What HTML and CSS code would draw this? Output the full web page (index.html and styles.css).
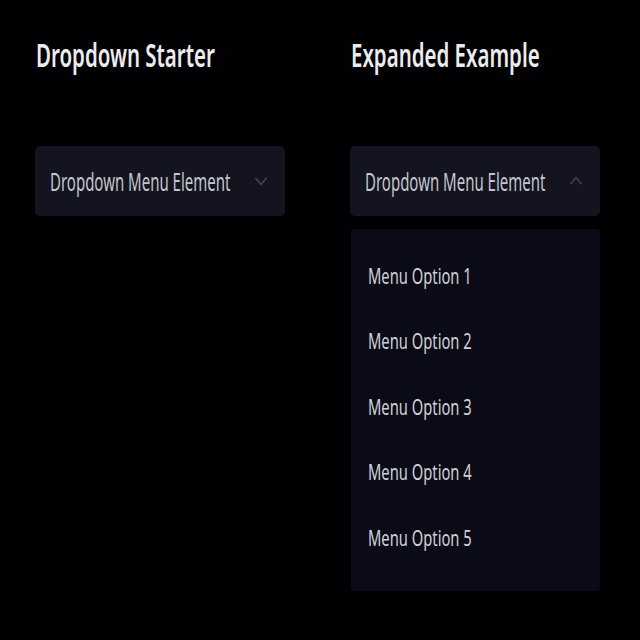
FILE: index.html
```html
<!DOCTYPE html>
<html>
<head>
<meta charset="utf-8">
<link rel="stylesheet" href="styles.css">
</head>
<body>
<main class="page">
  <section class="col">
    <h2 class="title"><span class="squeeze">Dropdown Starter</span></h2>
    <div class="select">
      <span class="label"><span class="squeeze narrow">Dropdown Menu Element</span></span>
      <svg class="chev" width="14" height="10" viewBox="0 0 14 10"><path d="M1.5 2 L7 8.5 L12.5 2" fill="none" stroke="currentColor" stroke-width="1.6"/></svg>
    </div>
  </section>
  <section class="col">
    <h2 class="title"><span class="squeeze">Expanded Example</span></h2>
    <div class="select">
      <span class="label"><span class="squeeze narrow">Dropdown Menu Element</span></span>
      <svg class="chev" width="14" height="10" viewBox="0 0 14 10"><path d="M1.5 8 L7 1.5 L12.5 8" fill="none" stroke="currentColor" stroke-width="1.6"/></svg>
    </div>
    <ul class="menu">
      <li class="item"><span class="squeeze wide">Menu Option 1</span></li>
      <li class="item"><span class="squeeze wide">Menu Option 2</span></li>
      <li class="item"><span class="squeeze wide">Menu Option 3</span></li>
      <li class="item"><span class="squeeze wide">Menu Option 4</span></li>
      <li class="item"><span class="squeeze wide">Menu Option 5</span></li>
    </ul>
  </section>
</main>
</body>
</html>
```
FILE: styles.css
```css
html, body {
  margin: 0;
  background: #010103;
}
body {
  font-family: "Noto Sans", "DejaVu Sans", sans-serif;
  color: #d8d9de;
  overflow: hidden;
}
.page {
  display: grid;
  grid-template-columns: 250px 250px;
  column-gap: 65px;
  padding: 0 0 0 35px;
}
.col {
  display: flex;
  flex-direction: column;
  min-width: 0;
}
.squeeze {
  display: inline-block;
  transform: scaleX(0.62);
  transform-origin: left center;
  white-space: nowrap;
}
.squeeze.narrow {
  transform: scaleX(0.6);
}
.squeeze.wide {
  transform: scaleX(0.67);
}
.title {
  margin: 32px 0 0 1px;
  height: 114px;
  font-size: 33px;
  font-weight: 600;
  line-height: 46px;
  color: #ececef;
  overflow: visible;
}
.select {
  height: 70px;
  box-sizing: border-box;
  background: #13141f;
  border-radius: 5px;
  display: flex;
  align-items: center;
  padding: 0 17px 0 15px;
}
.label {
  flex: 1 1 0;
  min-width: 0;
  font-size: 25px;
  color: #c4c5cd;
  line-height: 30px;
}
.chev {
  color: #3f4254;
  flex: none;
}
.menu {
  list-style: none;
  margin: 13px 0 0 1px;
  padding: 13px 0 21px 0;
  background: #0a0b16;
  border-radius: 4px;
}
.item {
  height: 65.5px;
  display: flex;
  align-items: center;
  padding-left: 17px;
  font-size: 22px;
  color: #cfd0d6;
}
```
